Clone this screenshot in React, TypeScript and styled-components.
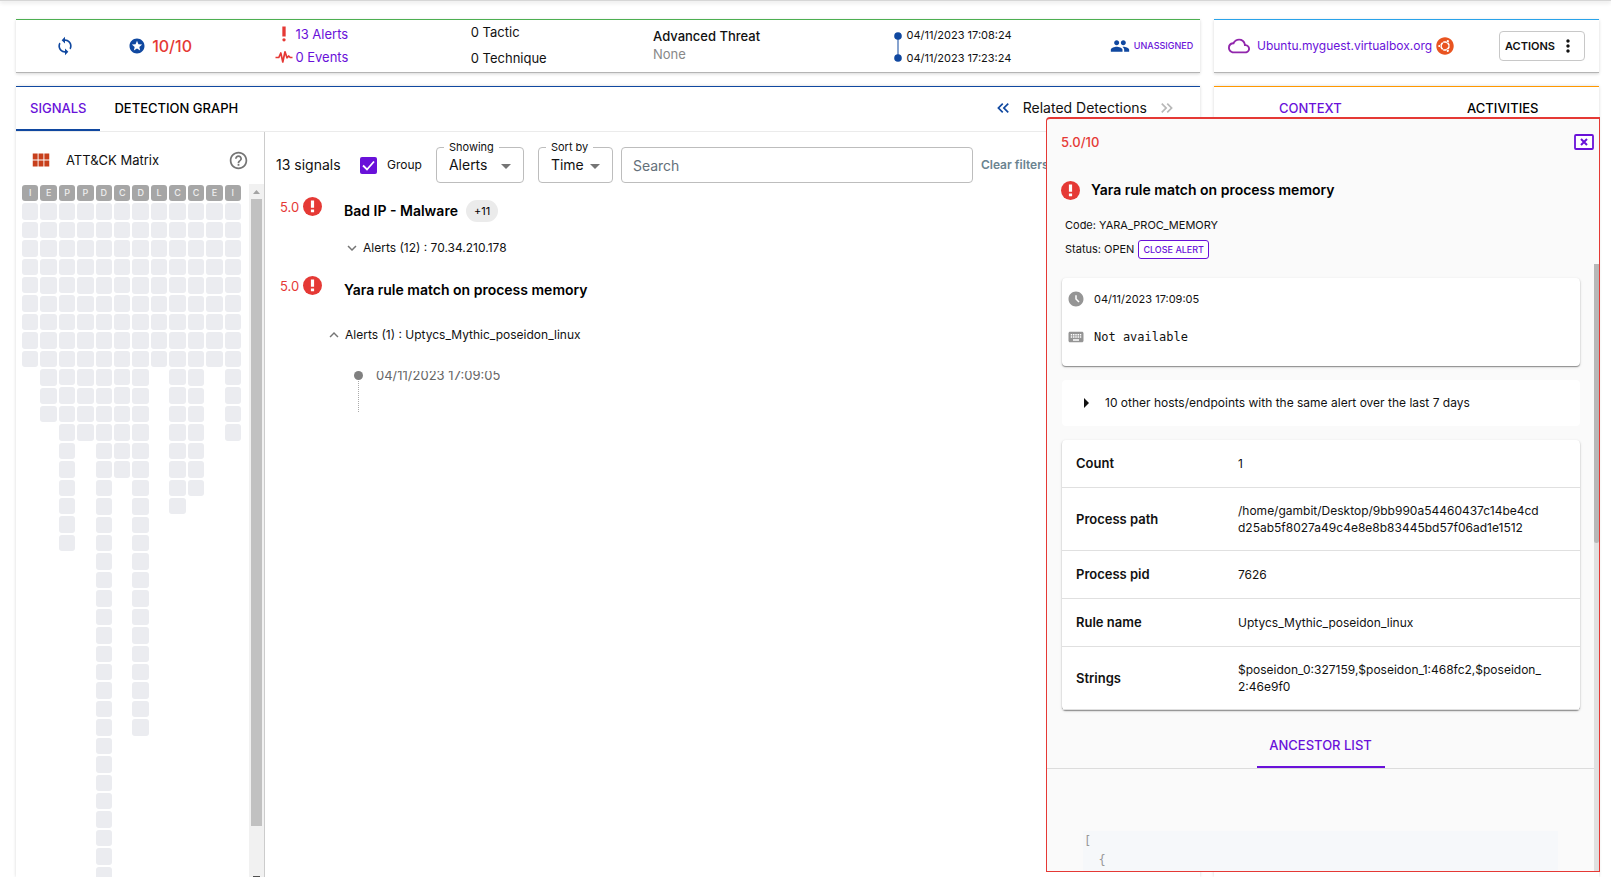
import React from "react";
import styled, { createGlobalStyle, css } from "styled-components";
import {
  MdAccessTimeFilled,
  MdCloudQueue,
  MdHelpOutline,
  MdKeyboard,
  MdKeyboardArrowDown,
  MdKeyboardArrowUp,
  MdKeyboardDoubleArrowLeft,
  MdKeyboardDoubleArrowRight,
  MdMoreVert,
  MdPeople,
  MdPriorityHigh,
  MdStars,
  MdSync,
  MdViewModule,
} from "react-icons/md";
import { FaUbuntu } from "react-icons/fa";

const color = {
  purple: "#6911d9",
  blue: "#1048a0",
  red: "#e53935",
  text: "#111",
  muted: "#888",
  line: "#e0e0e0",
};

const GlobalStyle = createGlobalStyle`
  *, *::before, *::after { box-sizing: border-box; }
  body {
    margin: 0;
    background: #fff;
    color: ${color.text};
    font: 400 13px/18px Inter, "Liberation Sans", sans-serif;
  }
  button, input, select { font: inherit; color: inherit; }
  button { background: none; border: 0; padding: 0; cursor: pointer; }
  a { color: ${color.purple}; text-decoration: none; }
  svg { display: block; flex: none; }
`;

const Page = styled.div`
  position: relative;
  height: 100vh;
  min-height: 640px;
  overflow: hidden;
  display: flex;
  flex-direction: column;
`;

const TopShadow = styled.div`
  flex: none;
  height: 1px;
  background: #d6d6d6;
  box-shadow: 0 1px 4px rgba(0, 0, 0, 0.3);
`;

const Columns = styled.div`
  flex: 1;
  min-height: 0;
  display: grid;
  grid-template-columns: minmax(0, 1fr) 385px;
  grid-template-rows: 54px minmax(0, 1fr);
  gap: 13px 14px;
  padding: 18px 12px 0 16px;
`;

const Card = styled.section<{ $accent: string }>`
  min-width: 0;
  min-height: 0;
  background: #fff;
  border-top: 1px solid ${(p) => p.$accent};
  box-shadow: 0 1px 3px rgba(0, 0, 0, 0.16), inset 0 -1px 0 #b4b4b4;
`;

const SummaryCard = styled(Card)`
  display: grid;
  grid-template-columns: 73fr 147fr 195fr 182fr 241fr 215fr 90fr;
  align-items: center;
  padding: 0 0 2px 39px;
  white-space: nowrap;
`;

const IconLine = styled.div<{ $gap: number }>`
  display: flex;
  align-items: center;
  gap: ${(p) => p.$gap}px;
`;

const Score = styled.span`
  color: ${color.red};
  font-size: 16px;
  font-weight: 500;
`;

const StatStack = styled.div<{ $gap: number }>`
  display: flex;
  flex-direction: column;
  gap: ${(p) => p.$gap}px;
  padding-bottom: 2px;
`;

const StatIcon = styled.span`
  display: flex;
  justify-content: center;
  width: 18px;
  color: ${color.red};
`;

const Strong = styled.span`
  font-weight: 500;
`;

const Muted = styled.span`
  color: ${color.muted};
`;

const Timeline = styled.div`
  display: flex;
  align-items: center;
  gap: 4px;
  padding-top: 2px;
  font-size: 11px;
`;

const TimelineDates = styled.div`
  display: grid;
  gap: 5px;
`;

const AssignButton = styled.button`
  display: flex;
  align-items: center;
  gap: 4px;
  color: ${color.purple};
  font-size: 9px;
  font-weight: 500;
`;

const HostCard = styled(Card)`
  display: flex;
  align-items: center;
  padding: 0 14px 2px;
  font-size: 12px;
`;

const HostLink = styled.a`
  margin: 0 4px 0 7px;
  color: ${color.purple};
`;

const ActionsButton = styled.button`
  display: flex;
  align-items: center;
  justify-content: space-between;
  width: 86px;
  height: 30px;
  margin-left: auto;
  padding: 0 6px 0 5px;
  border: 1px solid #c8c8c8;
  border-radius: 4px;
  font-size: 11px;
  font-weight: 600;
`;

const DetailCard = styled(Card)`
  display: flex;
  flex-direction: column;
  box-shadow: 0 0 3px rgba(0, 0, 0, 0.16);
`;

const TabBar = styled.nav`
  flex: none;
  display: flex;
  height: 45px;
  border-bottom: 1px solid #ebebeb;
`;

const Tab = styled.button<{ $active?: boolean; $wide?: boolean; $underline?: string }>`
  padding: 0 14px 1px;
  font-weight: 500;
  color: ${(p) => (p.$active ? color.purple : "#000")};
  border-bottom: 2px solid ${(p) => p.$underline ?? "transparent"};
  ${(p) => p.$wide && css`flex: 1;`}
`;

const Related = styled.div`
  display: flex;
  align-items: center;
  gap: 10px;
  margin-left: auto;
  padding: 0 23px 2px 0;
  font-size: 14px;
`;

const PlainButton = styled.button<{ $color: string }>`
  display: flex;
  color: ${(p) => p.$color};
`;

const DetailBody = styled.div`
  flex: 1;
  min-height: 0;
  display: grid;
  grid-template-columns: 249px minmax(0, 1fr);
`;

const MatrixPane = styled.aside`
  min-height: 0;
  display: flex;
  flex-direction: column;
  border-right: 1px solid #ccc;
`;

const MatrixHeader = styled.div`
  flex: none;
  display: flex;
  align-items: center;
  height: 52px;
  padding: 4px 15px 0 14px;
`;

const MatrixTitle = styled.span`
  flex: 1;
  margin-left: 14px;
`;

const MatrixBody = styled.div`
  flex: 1;
  min-height: 0;
  display: flex;
  overflow: hidden;
`;

const MatrixGrid = styled.div`
  flex: 1;
  display: grid;
  grid-template-columns: repeat(12, minmax(0, 1fr));
  gap: 2px;
  align-items: start;
  padding: 1px 8px 0 6px;
`;

const MatrixColumn = styled.div`
  display: grid;
  gap: 2px;
`;

const Cell = styled.div<{ $head?: boolean }>`
  aspect-ratio: 1;
  display: flex;
  align-items: center;
  justify-content: center;
  border-radius: 3px;
  font-size: 9px;
  line-height: 12px;
  font-weight: 500;
  color: #eee;
  background: ${(p) => (p.$head ? "#a6a6a6" : "#ebecf0")};
`;

const ScrollTrack = styled.div`
  flex: none;
  width: 15px;
  display: flex;
  flex-direction: column;
  align-items: center;
  background: #f1f1f1;
`;

const ScrollArrow = styled.span<{ $down?: boolean }>`
  flex: none;
  height: ${(p) => (p.$down ? 1 : 15)}px;
  display: flex;
  align-items: center;
  color: ${(p) => (p.$down ? "#505050" : "#a3a3a3")};
`;

const ScrollThumb = styled.span`
  width: 11px;
  flex: 627;
  background: #c1c1c1;
`;

const ScrollRest = styled.span`
  flex: 50;
`;

const SignalsPane = styled.div`
  min-width: 0;
  padding: 9px 0 0 11px;
`;

const Filters = styled.div`
  display: flex;
  align-items: flex-end;
  height: 42px;
  white-space: nowrap;
`;

const FilterItem = styled.label`
  display: flex;
  align-items: center;
  height: 36px;
  font-size: 12px;
`;

const SignalCount = styled(FilterItem).attrs({ as: "span" })`
  width: 84px;
  font-size: 14px;
`;

const CheckBox = styled.input`
  appearance: none;
  width: 17px;
  height: 17px;
  margin: 0 10px 0 0;
  border-radius: 2px;
  background: ${color.purple}
    url("data:image/svg+xml,%3Csvg xmlns='http://www.w3.org/2000/svg' viewBox='0 0 17 17'%3E%3Cpath d='M3 8.5l4 4 7-8' fill='none' stroke='white' stroke-width='1.8'/%3E%3C/svg%3E");
`;

const Outlined = styled.fieldset`
  position: relative;
  height: 42px;
  min-width: 0;
  margin: 0 0 0 14px;
  padding: 0;
  border: 1px solid #bdbdbd;
  border-radius: 4px;

  & > legend {
    height: 12px;
    margin-left: 7px;
    padding: 0 5px;
    font-size: 11px;
    line-height: 12px;
  }
  & > svg {
    position: absolute;
    right: 12px;
    top: 11px;
    color: #757575;
    pointer-events: none;
  }
`;

const Select = styled.select<{ $width: number }>`
  appearance: none;
  display: block;
  width: ${(p) => p.$width}px;
  height: 24px;
  padding: 0 12px;
  border: 0;
  background: none;
  font-size: 14px;
`;

const SearchInput = styled.input`
  flex: 1;
  min-width: 0;
  max-width: 352px;
  height: 36px;
  margin-left: 8px;
  padding: 0 11px;
  border: 1px solid #bdbdbd;
  border-radius: 4px;
  font-size: 14px;
  &::placeholder { color: #64707a; opacity: 1; }
`;

const ClearButton = styled.button`
  height: 36px;
  margin-left: 8px;
  color: #6b8490;
  font-size: 12px;
  font-weight: 600;
`;

const SignalList = styled.ul`
  list-style: none;
  margin: 0;
  padding: 14px 0 0 4px;
`;

const SignalRow = styled.li`
  display: grid;
  grid-template-columns: 64px minmax(0, 1fr);
  align-items: start;
  margin-bottom: 19px;
`;

const SignalScore = styled.div`
  display: flex;
  align-items: center;
  gap: 4px;
  color: ${color.red};
`;

const SignalTitle = styled.h3`
  display: flex;
  align-items: center;
  gap: 8px;
  height: 22px;
  margin: 3px 0 0;
  font-size: 14px;
  font-weight: 600;
  color: #000;
`;

const Pill = styled.span`
  padding: 2px 8px;
  border-radius: 11px;
  background: #ebebeb;
  font-size: 11px;
  font-weight: 400;
`;

const AlertsToggle = styled.button<{ $open?: boolean }>`
  display: flex;
  align-items: center;
  gap: 2px;
  margin: ${(p) => (p.$open ? "25px 0 0 -19px" : "17px 0 0 -1px")};
  font-size: 12px;
  & > svg { color: #757575; }
`;

const EventRow = styled.div`
  display: flex;
  gap: 13px;
  margin: 27px 0 0 10px;
  color: #666;
`;

const EventMarker = styled.span`
  display: flex;
  flex-direction: column;
  align-items: center;
  gap: 1px;
  width: 9px;
  &::before {
    content: "";
    width: 9px;
    height: 9px;
    border-radius: 50%;
    background: #808080;
  }
  &::after {
    content: "";
    height: 31px;
    border-left: 1px dotted #aaa;
  }
`;

const EventTime = styled.time`
  height: 12px;
  line-height: 8px;
  overflow: hidden;
`;

const AlertPanel = styled.aside`
  position: absolute;
  top: 117px;
  right: 11px;
  bottom: 5px;
  width: 554px;
  display: flex;
  flex-direction: column;
  background: #fafafa;
  border: 1px solid ${color.red};
  border-top-width: 2px;
  border-radius: 4px 0 0 0;
  overflow: hidden;
`;

const PanelHead = styled.header`
  flex: none;
  height: 145px;
  padding: 14px 5px 0 14px;
`;

const PanelTop = styled.div`
  display: flex;
  align-items: center;
  justify-content: space-between;
  color: ${color.red};
  font-weight: 500;
`;

const PanelTitle = styled.h2`
  display: flex;
  align-items: center;
  gap: 11px;
  height: 20px;
  margin: 29px 0 0;
  font-size: 14px;
  font-weight: 600;
  color: #000;
`;

const PanelMeta = styled.div`
  display: flex;
  align-items: center;
  gap: 4px;
  height: 24px;
  padding-left: 4px;
  font-size: 11px;
  ${PanelTitle} + & { margin-top: 13px; }
`;

const CloseAlert = styled.button`
  height: 19px;
  padding: 0 4px;
  border: 1px solid ${color.purple};
  border-radius: 3px;
  background: #fff;
  color: ${color.purple};
  font-size: 9px;
  line-height: 17px;
  font-weight: 500;
`;

const PanelScroll = styled.div`
  flex: 1;
  min-height: 0;
  display: flex;
`;

const PanelContent = styled.div`
  flex: 1;
  min-width: 0;
  overflow: hidden;
`;

const PanelTrack = styled.div`
  width: 5px;
  background: #e0e0e0;
  display: flex;
  flex-direction: column;
  &::before {
    content: "";
    flex: 0 0 46%;
    border-radius: 0 0 3px 3px;
    background: #b8b8b8;
  }
`;

const Sheet = styled.div<{ $raised?: boolean }>`
  margin: 14px 14px 0 15px;
  border-radius: 4px;
  background: #fff;
  ${(p) => p.$raised && css`box-shadow: 0 1px 1px #8f8f8f, 0 1px 3px rgba(0, 0, 0, 0.16);`}
`;

const InfoSheet = styled(Sheet)`
  height: 88px;
  padding: 11px 5px 0;
  font-size: 11px;
  & > div { height: 20px; }
  & > div + div { margin-top: 18px; }
  svg { color: #959595; }
`;

const Mono = styled.span`
  font: 12px/18px "DejaVu Sans Mono", monospace;
`;

const HostsSheet = styled(Sheet)`
  & > button {
    display: flex;
    align-items: center;
    gap: 16px;
    width: 100%;
    height: 46px;
    padding: 0 0 1px 22px;
    font-size: 12px;
  }
`;

const DataTable = styled.table`
  width: 100%;
  border-collapse: collapse;

  th, td {
    padding: 14px 0 14px 14px;
    text-align: left;
    vertical-align: middle;
    border-bottom: 1px solid ${color.line};
  }
  th {
    width: 162px;
    font-weight: 600;
    line-height: 19px;
  }
  td {
    padding-right: 37px;
    font-size: 12px;
    line-height: 17px;
    word-break: break-all;
  }
`;

const PanelTabs = styled.nav`
  display: flex;
  justify-content: center;
  height: 45px;
  margin-top: 14px;
  border-bottom: 1px solid #dcdcdc;
`;

const PanelTab = styled.button`
  width: 128px;
  color: ${color.purple};
  font-weight: 500;
  border-bottom: 2px solid ${color.purple};
`;

const Code = styled.pre`
  margin: 62px 36px 0;
  padding: 1px 1px 0;
  height: 200px;
  background: #f6f8fa;
  color: #999;
  font: 12px/19px "DejaVu Sans Mono", monospace;
`;

const matrix: [string, number][] = [
  ["I", 9], ["E", 12], ["P", 19], ["P", 13], ["D", 40], ["C", 15],
  ["D", 29], ["L", 9], ["C", 17], ["C", 16], ["E", 9], ["I", 13],
];

const details: [string, string][] = [
  ["Count", "1"],
  ["Process path", "/home/gambit/Desktop/9bb990a54460437c14be4cdd25ab5f8027a49c4e8e8b83445bd57f06ad1e1512"],
  ["Process pid", "7626"],
  ["Rule name", "Uptycs_Mythic_poseidon_linux"],
  ["Strings", "$poseidon_0:327159,$poseidon_1:468fc2,$poseidon_2:46e9f0"],
];

const AlertBadge = () => (
  <svg width="19" height="19" viewBox="0 0 19 19">
    <circle cx="9.5" cy="9.5" r="9.5" fill={color.red} />
    <path d="M7.9 3.6h3.2v7.2H7.9zM7.9 12.4h3.2v2.8H7.9z" fill="#fff" />
  </svg>
);

const Pulse = () => (
  <svg width="18" height="13" viewBox="0 0 18 13" fill="none" stroke={color.red} strokeWidth="1.7" strokeLinejoin="round">
    <path d="M0.5 7.5h3.3L5.8 3l2 9L10 1.8l2 6 1.7-1.8 1.5 1.5h2.3" />
  </svg>
);

const TimeRange = () => (
  <svg width="8" height="32" viewBox="0 0 8 32" fill={color.blue}>
    <path d="M3.5 4h1v24h-1z" />
    <circle cx="4" cy="5" r="3.8" />
    <circle cx="4" cy="27" r="3.8" />
  </svg>
);

const Triangle = ({ d, w, h }: { d: string; w: number; h: number }) => (
  <svg width={w} height={h} viewBox={`0 0 ${w} ${h}`} fill="currentColor">
    <path d={d} />
  </svg>
);

const CloseBox = () => (
  <svg width="20" height="16" viewBox="0 0 20 16" fill="none" stroke={color.purple}>
    <rect x="1" y="1" width="18" height="14" rx="1" strokeWidth="1.8" fill="#fff" />
    <path d="M7 5l6 6M13 5l-6 6" strokeWidth="2" />
  </svg>
);

const OutlinedSelect = ({ id, label, value, width }: { id: string; label: string; value: string; width: number }) => (
  <Outlined>
    <legend>
      <label htmlFor={id}>{label}</label>
    </legend>
    <Select id={id} $width={width} defaultValue={value}>
      <option>{value}</option>
    </Select>
    <Triangle w={10} h={5} d="M0 0h10L5 5z" />
  </Outlined>
);

export default function App() {
  return (
    <>
      <GlobalStyle />
      <Page>
        <TopShadow />
        <Columns>
          <SummaryCard $accent="#4caf50">
            <PlainButton $color={color.blue} aria-label="Refresh">
              <MdSync size={20} />
            </PlainButton>
            <IconLine $gap={6}>
              <MdStars size={18} color={color.blue} />
              <Score>10/10</Score>
            </IconLine>
            <StatStack $gap={4}>
              <IconLine $gap={2}>
                <StatIcon><MdPriorityHigh size={20} /></StatIcon>
                <a href="#alerts">13 Alerts</a>
              </IconLine>
              <IconLine $gap={2}>
                <StatIcon><Pulse /></StatIcon>
                <a href="#events">0 Events</a>
              </IconLine>
            </StatStack>
            <StatStack $gap={8}>
              <span>0 Tactic</span>
              <span>0 Technique</span>
            </StatStack>
            <StatStack $gap={0}>
              <Strong>Advanced Threat</Strong>
              <Muted>None</Muted>
            </StatStack>
            <Timeline>
              <TimeRange />
              <TimelineDates>
                <span>04/11/2023 17:08:24</span>
                <span>04/11/2023 17:23:24</span>
              </TimelineDates>
            </Timeline>
            <AssignButton>
              <MdPeople size={20} color={color.blue} />
              UNASSIGNED
            </AssignButton>
          </SummaryCard>

          <HostCard $accent="#29a3ea">
            <MdCloudQueue size={22} color="#9126ac" />
            <HostLink href="#host">Ubuntu.myguest.virtualbox.org</HostLink>
            <FaUbuntu size={18} color="#e95420" />
            <ActionsButton>
              ACTIONS
              <MdMoreVert size={20} />
            </ActionsButton>
          </HostCard>

          <DetailCard $accent={color.blue}>
            <TabBar>
              <Tab $active $underline={color.blue}>SIGNALS</Tab>
              <Tab>DETECTION GRAPH</Tab>
              <Related>
                <PlainButton $color={color.blue} aria-label="Previous detections">
                  <MdKeyboardDoubleArrowLeft size={20} />
                </PlainButton>
                Related Detections
                <PlainButton $color="#b8b8b8" aria-label="Next detections">
                  <MdKeyboardDoubleArrowRight size={20} />
                </PlainButton>
              </Related>
            </TabBar>
            <DetailBody>
              <MatrixPane>
                <MatrixHeader>
                  <MdViewModule size={22} color="#c8401c" />
                  <MatrixTitle>ATT&amp;CK Matrix</MatrixTitle>
                  <MdHelpOutline size={21} color="#757575" />
                </MatrixHeader>
                <MatrixBody>
                  <MatrixGrid>
                    {matrix.map(([letter, count], i) => (
                      <MatrixColumn key={i}>
                        <Cell $head>{letter}</Cell>
                        {Array.from({ length: count }, (_, n) => (
                          <Cell key={n} />
                        ))}
                      </MatrixColumn>
                    ))}
                  </MatrixGrid>
                  <ScrollTrack>
                    <ScrollArrow><Triangle w={7} h={4} d="M0 4h7L3.5 0z" /></ScrollArrow>
                    <ScrollThumb />
                    <ScrollRest />
                    <ScrollArrow $down><Triangle w={7} h={1} d="M0 0h7v1H0z" /></ScrollArrow>
                  </ScrollTrack>
                </MatrixBody>
              </MatrixPane>

              <SignalsPane>
                <Filters>
                  <SignalCount>13 signals</SignalCount>
                  <FilterItem>
                    <CheckBox type="checkbox" defaultChecked />
                    Group
                  </FilterItem>
                  <OutlinedSelect id="showing" label="Showing" value="Alerts" width={86} />
                  <OutlinedSelect id="sort" label="Sort by" value="Time" width={73} />
                  <SearchInput type="search" placeholder="Search" aria-label="Search" />
                  <ClearButton>Clear filters</ClearButton>
                </Filters>
                <SignalList>
                  <SignalRow>
                    <SignalScore>5.0 <AlertBadge /></SignalScore>
                    <div>
                      <SignalTitle>Bad IP - Malware <Pill>+11</Pill></SignalTitle>
                      <AlertsToggle>
                        <MdKeyboardArrowDown size={18} />
                        Alerts (12) : 70.34.210.178
                      </AlertsToggle>
                    </div>
                  </SignalRow>
                  <SignalRow>
                    <SignalScore>5.0 <AlertBadge /></SignalScore>
                    <div>
                      <SignalTitle>Yara rule match on process memory</SignalTitle>
                      <AlertsToggle $open>
                        <MdKeyboardArrowUp size={18} />
                        Alerts (1) : Uptycs_Mythic_poseidon_linux
                      </AlertsToggle>
                      <EventRow>
                        <EventMarker />
                        <EventTime>04/11/2023 17:09:05</EventTime>
                      </EventRow>
                    </div>
                  </SignalRow>
                </SignalList>
              </SignalsPane>
            </DetailBody>
          </DetailCard>

          <DetailCard $accent="#ff9800">
            <TabBar>
              <Tab $wide $active>CONTEXT</Tab>
              <Tab $wide>ACTIVITIES</Tab>
            </TabBar>
          </DetailCard>
        </Columns>

        <AlertPanel>
          <PanelHead>
            <PanelTop>
              5.0/10
              <PlainButton $color={color.purple} aria-label="Close panel">
                <CloseBox />
              </PlainButton>
            </PanelTop>
            <PanelTitle>
              <AlertBadge />
              Yara rule match on process memory
            </PanelTitle>
            <PanelMeta>Code: YARA_PROC_MEMORY</PanelMeta>
            <PanelMeta>
              Status: OPEN
              <CloseAlert>CLOSE ALERT</CloseAlert>
            </PanelMeta>
          </PanelHead>
          <PanelScroll>
            <PanelContent>
              <InfoSheet $raised>
                <IconLine $gap={9}>
                  <MdAccessTimeFilled size={18} />
                  04/11/2023 17:09:05
                </IconLine>
                <IconLine $gap={9}>
                  <MdKeyboard size={18} />
                  <Mono>Not available</Mono>
                </IconLine>
              </InfoSheet>
              <HostsSheet>
                <button>
                  <Triangle w={5} h={10} d="M0 0l5 5-5 5z" />
                  10 other hosts/endpoints with the same alert over the last 7 days
                </button>
              </HostsSheet>
              <Sheet $raised>
                <DataTable>
                  <tbody>
                    {details.map(([name, value]) => (
                      <tr key={name}>
                        <th scope="row">{name}</th>
                        <td>{value}</td>
                      </tr>
                    ))}
                  </tbody>
                </DataTable>
              </Sheet>
              <PanelTabs>
                <PanelTab>ANCESTOR LIST</PanelTab>
              </PanelTabs>
              <Code>{"[\n  {"}</Code>
            </PanelContent>
            <PanelTrack />
          </PanelScroll>
        </AlertPanel>
      </Page>
    </>
  );
}
